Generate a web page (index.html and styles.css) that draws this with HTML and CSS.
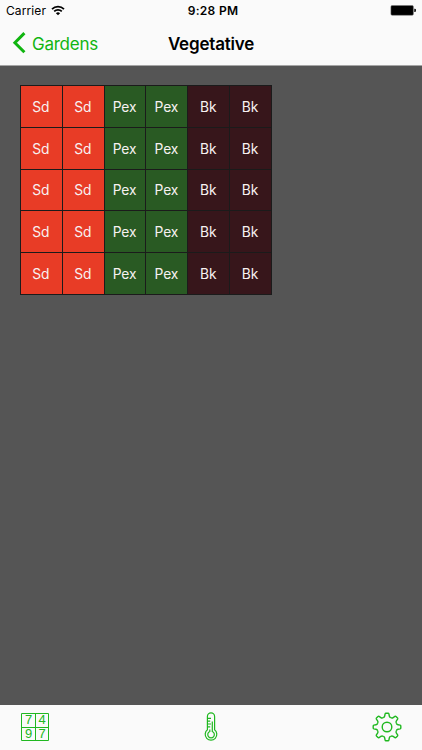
FILE: index.html
```html
<!DOCTYPE html>
<html lang="en">
<head>
<meta charset="utf-8">
<title>Vegetative</title>
<link rel="stylesheet" href="styles.css">
</head>
<body>
<header>
  <div class="status">
    <div class="carrier"><span>Carrier</span>
      <svg width="14" height="11" viewBox="0 0 14 11"><g fill="none" stroke="#000" stroke-width="1.7"><path d="M1 4.1a8.4 8.4 0 0 1 12 0"/><path d="M3.2 6.4a5.3 5.3 0 0 1 7.6 0"/></g><path d="M4.9 8.2a3 3 0 0 1 4.2 0L7 10.3z"/></svg>
    </div>
    <div class="time">9:28 PM</div>
    <svg class="battery" width="26" height="11" viewBox="0 0 26 11"><rect x=".9" y=".5" width="22.5" height="9.8" rx="1.3" fill="#000" stroke="#777" stroke-width=".5"/><path d="M24.3 3.8h.6a1 1 0 0 1 1 1v1.2a1 1 0 0 1-1 1h-.6z"/></svg>
  </div>
  <nav>
    <div class="back"><svg width="14" height="22" viewBox="0 0 14 22"><path d="M12.4 1.1L2.9 10.7l9.5 9.6" fill="none" stroke="#10b510" stroke-width="3"/></svg><span>Gardens</span></div>
    <h1>Vegetative</h1>
  </nav>
</header>
<main>
  <div class="bed">
    <div class="sd">Sd</div><div class="sd">Sd</div><div class="pex">Pex</div><div class="pex">Pex</div><div class="bk">Bk</div><div class="bk">Bk</div>
    <div class="sd">Sd</div><div class="sd">Sd</div><div class="pex">Pex</div><div class="pex">Pex</div><div class="bk">Bk</div><div class="bk">Bk</div>
    <div class="sd">Sd</div><div class="sd">Sd</div><div class="pex">Pex</div><div class="pex">Pex</div><div class="bk">Bk</div><div class="bk">Bk</div>
    <div class="sd">Sd</div><div class="sd">Sd</div><div class="pex">Pex</div><div class="pex">Pex</div><div class="bk">Bk</div><div class="bk">Bk</div>
    <div class="sd">Sd</div><div class="sd">Sd</div><div class="pex">Pex</div><div class="pex">Pex</div><div class="bk">Bk</div><div class="bk">Bk</div>
  </div>
</main>
<footer>
  <div class="numbers"><span>7</span><span>4</span><span>9</span><span>7</span></div>
  <svg class="thermo" width="14" height="30" viewBox="0 0 14 30"><g fill="none" stroke="#20b820" stroke-width="1.2"><path d="M3.4 17.8V4.5a3.6 3.6 0 0 1 7.2 0v13.3a5.8 5.8 0 1 1-7.2 0z"/><path d="M8.3 9.5v10a3.3 3.3 0 1 1-2.5 0v-2"/><path d="M3.6 6.4h3.4M3.6 9.2h2.6M3.6 12h3.4M3.6 14.8h2.6"/></g></svg>
  <svg class="gear" width="30" height="30" viewBox="-15 -15 30 30">
    <defs><path id="tooth" d="M-3.9-9.42C-2.9-9.5-2.5-10-2.3-11L-1.9-13.1Q-1.7-13.8-1.1-13.8H1.1Q1.7-13.8 1.9-13.1L2.3-11C2.5-10 2.9-9.5 3.9-9.42"/></defs>
    <g fill="none" stroke="#20b820" stroke-width="1.4"><circle r="4.8"/><use href="#tooth"/><use href="#tooth" transform="rotate(45)"/><use href="#tooth" transform="rotate(90)"/><use href="#tooth" transform="rotate(135)"/><use href="#tooth" transform="rotate(180)"/><use href="#tooth" transform="rotate(225)"/><use href="#tooth" transform="rotate(270)"/><use href="#tooth" transform="rotate(315)"/></g>
  </svg>
</footer>
</body>
</html>
```
FILE: styles.css
```css
* { box-sizing: border-box; }
body {
  margin: 0;
  width: 422px;
  height: 750px;
  display: flex;
  flex-direction: column;
  overflow: hidden;
  background: #555;
  font-family: Inter, "Liberation Sans", sans-serif;
}
svg { display: block; flex: none; }
header {
  height: 66px;
  background: #fafafa;
  border-bottom: 1px solid #a5a5a5;
}
.status {
  height: 22px;
  display: grid;
  grid-template-columns: 1fr auto 1fr;
  align-items: center;
  padding: 0 6px;
  font-size: 12px;
  line-height: 22px;
}
.carrier { display: flex; align-items: center; gap: 5px; letter-spacing: 0.1px; }
.carrier svg { margin-top: -1px; }
.time { font-weight: 600; letter-spacing: 0.3px; padding-left: 4px; }
.battery { justify-self: end; margin-top: -1px; }
nav {
  height: 43px;
  display: grid;
  grid-template-columns: 1fr auto 1fr;
  align-items: center;
  padding: 0 12px;
}
.back {
  display: flex;
  align-items: center;
  gap: 6px;
  color: #10b510;
  font-size: 17px;
  letter-spacing: -0.25px;
}
.back svg { margin-top: -1px; }
h1 { margin: 0; font-size: 17px; font-weight: 600; letter-spacing: -0.2px; }
main { flex: 1; padding: 19px 20px; }
.bed {
  width: 252px;
  height: 210px;
  display: grid;
  grid-template-columns: repeat(6, 1fr);
  grid-template-rows: repeat(5, 1fr);
  gap: 1px;
  padding: 1px;
  background: #1b1b1b;
}
.bed div {
  display: flex;
  align-items: center;
  justify-content: center;
  color: #f7f1f1;
  font-size: 13.8px;
  letter-spacing: -0.1px;
  padding: 1px 1px 0 0;
}
.bed .sd { background: #e83c26; }
.bed .pex { background: #295a23; }
.bed .bk { background: #37161b; }
footer {
  height: 45px;
  display: flex;
  justify-content: space-between;
  padding: 8px 20px 0 21px;
  background: #fafafa;
}
.numbers {
  width: 28px;
  height: 28px;
  display: grid;
  grid-template-columns: 13px 12px;
  grid-template-rows: 13px 12px;
  gap: 1px;
  padding: 1px;
  border-radius: 1px;
  background: #20b820;
}
.numbers span {
  background: #fafafa;
  color: #20b820;
  font: 13px/12px "Liberation Sans", sans-serif;
  text-align: center;
}
.thermo { margin-top: -1px; }
.gear { margin-top: -1px; }
```
